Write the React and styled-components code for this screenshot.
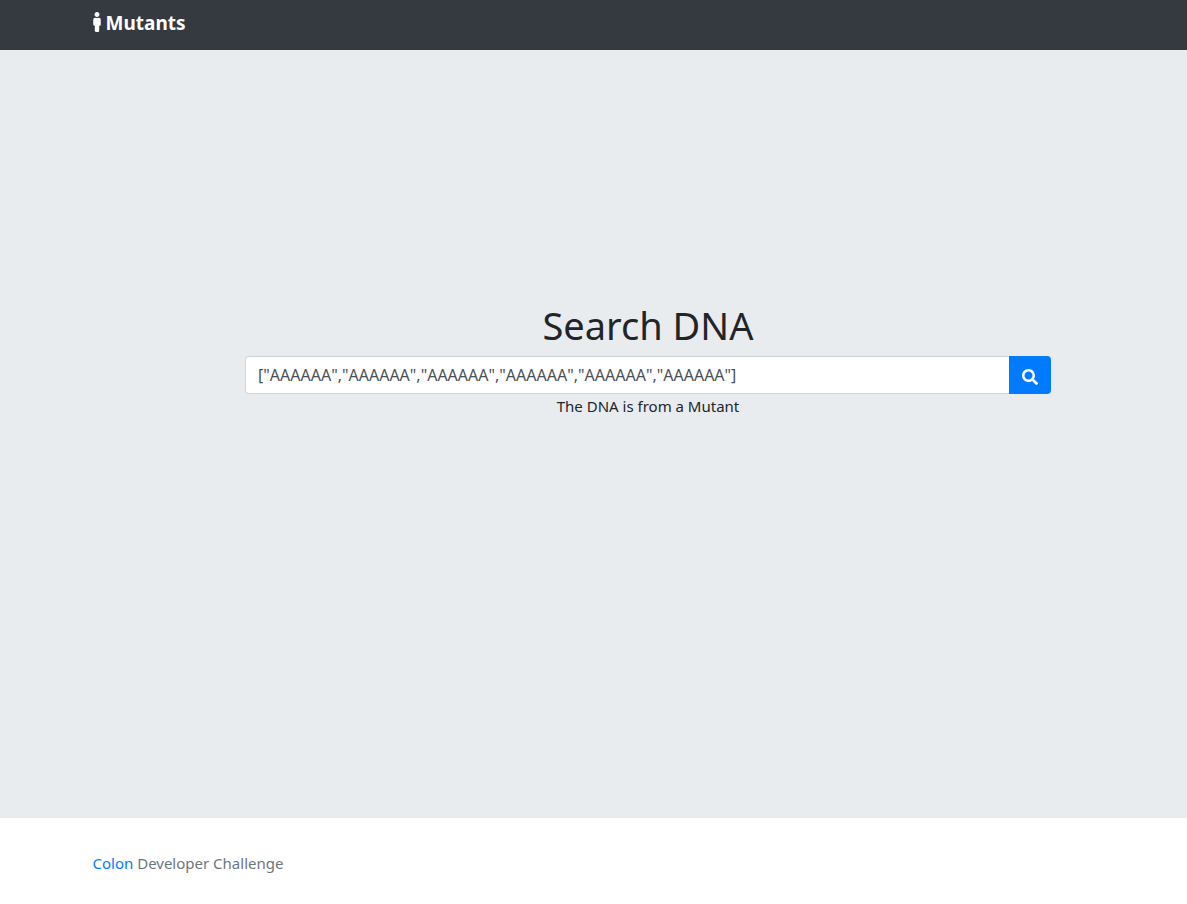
import React, { useState } from "react";
import styled, { createGlobalStyle } from "styled-components";
import { FaMale, FaSearch } from "react-icons/fa";

const GlobalStyle = createGlobalStyle`
  *, *::before, *::after { box-sizing: border-box; }
  body {
    margin: 0;
    background: #fff;
    color: #212529;
    font-family: "Noto Sans", "Open Sans", sans-serif;
    font-size: 15px;
    line-height: 24px;
  }
`;

const Page = styled.div`
  display: flex;
  flex-direction: column;
  min-height: 100vh;
`;

const Container = styled.div`
  width: 100%;
  max-width: 1032px;
  margin: 0 auto;
  padding: 0 15px;
`;

const Navbar = styled.header`
  padding: 8px 0 12px;
  background: #343a40;
  box-shadow: 0 2px 4px rgba(0, 0, 0, 0.08);
`;

const Brand = styled.a`
  display: flex;
  width: fit-content;
  align-items: center;
  gap: 5px;
  color: #fff;
  font-size: 19px;
  font-weight: 700;
  line-height: 30px;
  text-decoration: none;
`;

const BrandIcon = styled(FaMale)`
  width: 8px;
  height: 20px;
  margin-bottom: 3px;
`;

const Hero = styled.main`
  display: flex;
  flex: 1;
  flex-direction: column;
  align-items: center;
  padding: 251px 136px 0 245px;
  background: #e9ecef;
`;

const Title = styled.h1`
  margin: 0 0 7px;
  font-size: 38px;
  font-weight: 400;
  line-height: 48px;
`;

const SearchForm = styled.form`
  display: flex;
  width: 100%;
`;

const SearchInput = styled.input`
  flex: 1;
  min-width: 0;
  height: 38px;
  padding: 6px 12px;
  border: 1px solid #ced4da;
  border-right: 0;
  border-radius: 4px 0 0 4px;
  background: #fff;
  color: #495057;
  font: inherit;
  font-size: 16px;
  font-kerning: none;
`;

const SearchButton = styled.button`
  display: flex;
  align-items: center;
  justify-content: center;
  width: 42px;
  height: 38px;
  padding: 4px 0 0;
  border: 0;
  border-radius: 0 4px 4px 0;
  background: #007bff;
  color: #fff;
  font-size: 16px;
  cursor: pointer;
`;

const Result = styled.p`
  margin: 0;
`;

const Footer = styled.footer`
  padding: 33px 0 29px;
  color: #6c757d;
`;

const FooterLink = styled.a`
  color: #007bff;
  text-decoration: none;
`;

export default function App() {
  const [dna, setDna] = useState(
    '["AAAAAA","AAAAAA","AAAAAA","AAAAAA","AAAAAA","AAAAAA"]'
  );

  return (
    <Page>
      <GlobalStyle />
      <Navbar>
        <Container>
          <Brand href="#">
            <BrandIcon aria-hidden="true" />
            Mutants
          </Brand>
        </Container>
      </Navbar>
      <Hero>
        <Title>Search DNA</Title>
        <SearchForm onSubmit={(event) => event.preventDefault()}>
          <SearchInput
            type="text"
            aria-label="DNA sequence"
            value={dna}
            onChange={(event) => setDna(event.target.value)}
          />
          <SearchButton type="submit" aria-label="Search">
            <FaSearch aria-hidden="true" />
          </SearchButton>
        </SearchForm>
        <Result>The DNA is from a Mutant</Result>
      </Hero>
      <Footer>
        <Container>
          <FooterLink href="#">Colon</FooterLink> Developer Challenge
        </Container>
      </Footer>
    </Page>
  );
}
